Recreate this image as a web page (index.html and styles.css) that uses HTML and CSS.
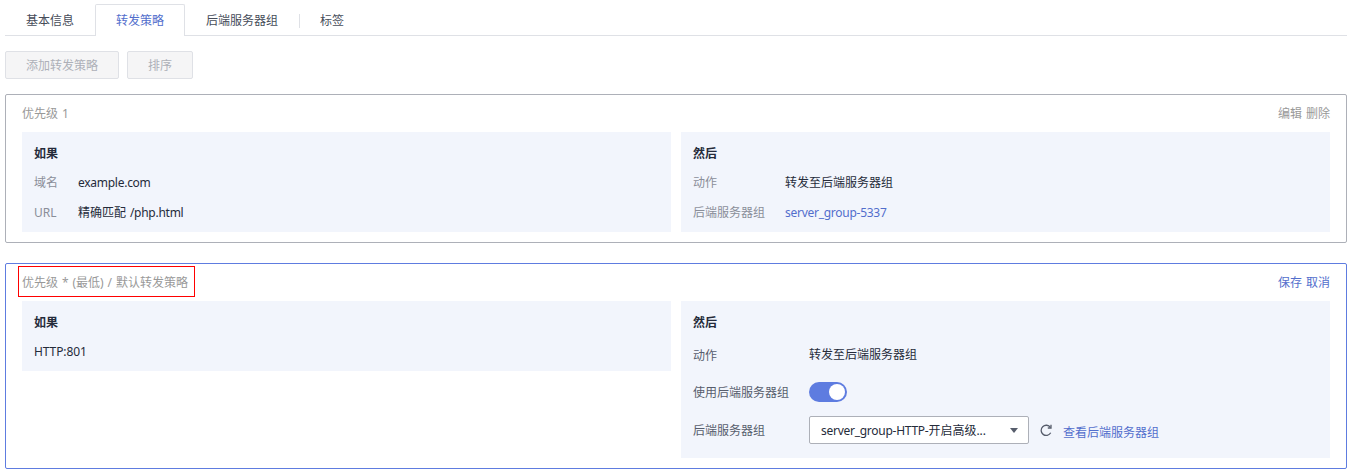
FILE: index.html
```html
<!DOCTYPE html>
<html lang="zh-CN">
<head>
<meta charset="utf-8">
<title>转发策略</title>
<link rel="stylesheet" href="styles.css">
</head>
<body>
<nav class="tabs">
  <a class="tab">基本信息</a>
  <a class="tab tab-active">转发策略</a>
  <a class="tab">后端服务器组</a>
  <span class="tab-divider"></span>
  <a class="tab">标签</a>
</nav>
<div class="toolbar">
  <button class="btn" disabled>添加转发策略</button>
  <button class="btn" disabled>排序</button>
</div>
<section class="card">
  <header class="card-head">
    <span>优先级 1</span>
    <span class="actions">编辑 删除</span>
  </header>
  <div class="panels">
    <div class="panel">
      <h3>如果</h3>
      <div class="row"><span class="label label-short">域名</span><span class="latin">example.com</span></div>
      <div class="row"><span class="label label-short">URL</span><span>精确匹配 <span class="latin">/php.html</span></span></div>
    </div>
    <div class="panel">
      <h3>然后</h3>
      <div class="row"><span class="label label-mid">动作</span><span>转发至后端服务器组</span></div>
      <div class="row"><span class="label label-mid">后端服务器组</span><a class="link latin">server_group-5337</a></div>
    </div>
  </div>
</section>
<section class="card card-editing">
  <header class="card-head">
    <span class="marked">优先级 * (最低) / 默认转发策略</span>
    <span class="actions link">保存 取消</span>
  </header>
  <div class="panels">
    <div class="panel">
      <h3>如果</h3>
      <div class="row http">HTTP:801</div>
    </div>
    <div class="panel form">
      <h3>然后</h3>
      <div class="row row-first"><span class="label label-long">动作</span><span class="action-value">转发至后端服务器组</span></div>
      <div class="row"><span class="label label-long">使用后端服务器组</span><span class="switch"></span></div>
      <div class="row">
        <span class="label label-long">后端服务器组</span>
        <div class="select"><span><span class="latin">server_group-HTTP-</span>开启高级...</span><i class="caret"></i></div>
        <svg class="refresh" width="14" height="14" viewBox="0 0 14 14" fill="none" stroke="#575d6c" stroke-width="1.3"><path d="M11.7 9.8A5.1 5.1 0 1 1 11.4 4.4"/><path d="M12 1.8V5H8.8"/></svg>
        <a class="link view-link">查看后端服务器组</a>
      </div>
    </div>
  </div>
</section>
</body>
</html>
```
FILE: styles.css
```css
* { box-sizing: border-box; }
body {
  margin: 0;
  padding: 4px 6px 0 5px;
  background: #fff;
  color: #252b3a;
  font: 12px/18px "Noto Sans", "Noto Sans CJK SC", sans-serif;
  word-spacing: 0.8px;
}
.latin { letter-spacing: -0.27px; }
.http { letter-spacing: -0.1px; }
.tabs {
  display: flex;
  height: 32px;
  border-bottom: 1px solid #dfe1e6;
}
.tab {
  height: 32px;
  padding: 0 21px;
  line-height: 34px;
  color: #464c59;
}
.tab-active {
  width: 90px;
  padding: 0 20px;
  line-height: 32px;
  border: 1px solid #dfe1e6;
  border-bottom: 0;
  border-radius: 2px 2px 0 0;
  background: #fff;
  color: #526ecc;
}
.tab-divider {
  width: 1px;
  height: 14px;
  margin-top: 10px;
  background: #dfe1e6;
}
.tab-divider + .tab { padding-left: 20px; }
.toolbar {
  display: flex;
  gap: 8px;
  margin-top: 15px;
}
.btn {
  height: 28px;
  padding: 2px 20px 0;
  border: 1px solid #dfe1e6;
  border-radius: 2px;
  background: #f5f5f6;
  color: #adb0b8;
  font: inherit;
}
.card {
  height: 149px;
  margin-top: 15px;
  padding: 0 16px;
  border: 1px solid #adb0b8;
  border-radius: 2px;
}
.card-editing {
  height: 206px;
  margin-top: 20px;
  border-color: #5e7ce0;
}
.card-head {
  display: flex;
  justify-content: space-between;
  height: 37px;
  line-height: 38px;
  color: #999;
}
.marked {
  width: 177px;
  height: 31px;
  margin: 2px 0 0 -4px;
  padding-left: 3px;
  border: 1px solid #f00;
  line-height: 31px;
  white-space: nowrap;
}
.panels {
  display: grid;
  grid-template-columns: 1fr 1fr;
  gap: 10px;
  align-items: start;
}
.panel {
  padding: 6px 12px 4px;
  background: #f2f5fc;
}
h3 {
  height: 30px;
  margin: 0;
  font-size: 12px;
  line-height: 32px;
}
.row {
  display: flex;
  align-items: center;
  height: 30px;
}
.label { flex: none; color: #8a8e99; }
.label-short { width: 44px; }
.label-mid { width: 92px; }
.label-long { width: 116px; padding-top: 2px; color: #575d6c; }
.link { color: #526ecc; }
.form { padding-bottom: 9px; }
.form .row { height: 38px; }
.form .row-first { height: 36px; }
.switch {
  display: flex;
  justify-content: flex-end;
  width: 38px;
  height: 20px;
  padding: 2px;
  border-radius: 10px;
  background: #5e7ce0;
}
.switch::after {
  content: "";
  width: 16px;
  height: 16px;
  border-radius: 50%;
  background: #fff;
}
.select {
  display: flex;
  align-items: center;
  justify-content: space-between;
  width: 220px;
  height: 28px;
  padding: 1px 10px 0 11px;
  border: 1px solid #adb0b8;
  border-radius: 2px;
  background: #fff;
}
.caret {
  border: 4px solid transparent;
  border-top: 5px solid #575d6c;
  border-bottom: 0;
}
.refresh { margin: 0 10px; }
.view-link { padding-top: 6px; }
```
